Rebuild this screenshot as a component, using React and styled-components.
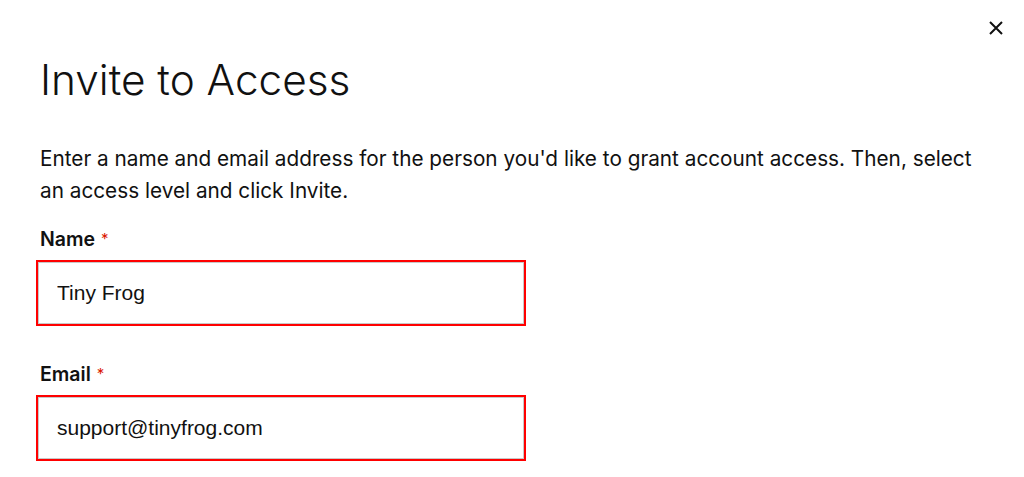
import React from "react";
import styled, { createGlobalStyle } from "styled-components";

const Global = createGlobalStyle`
  html, body { margin: 0; padding: 0; background: #fff; }
  body { font-family: Inter, "Noto Sans", sans-serif; color: #111; }
`;

const Dialog = styled.div`
  position: relative;
  width: 1024px;
  height: 477px;
  box-sizing: border-box;
  padding: 52px 40px 0 40px;
  overflow: hidden;
`;

const Close = styled.button`
  position: absolute;
  top: 20px;
  right: 20px;
  width: 16px;
  height: 16px;
  padding: 0;
  border: none;
  background: none;
  display: flex;
  align-items: center;
  justify-content: center;
  cursor: pointer;
`;

const Title = styled.h1`
  margin: 0;
  font-weight: 300;
  font-size: 42.3px;
  line-height: 56px;
  letter-spacing: 0;
  color: #111;
`;

const Intro = styled.p`
  margin: 35px 0 0 0;
  font-size: 20.75px;
  line-height: 32px;
  color: #111;
  max-width: 944px;
`;

const Field = styled.div`
  display: flex;
  flex-direction: column;
  margin-top: ${(p) => p.$gap}px;
`;

const Label = styled.label`
  font-size: 19.5px;
  font-weight: 600;
  line-height: 26px;
  color: #111;
  margin-bottom: 8px;
`;

const Req = styled.span`
  color: #db1802;
  font-weight: 400;
  font-size: 15px;
  margin-left: 6px;
  vertical-align: top;
`;

const Highlight = styled.div`
  width: 490px;
  box-sizing: border-box;
  border: 2px solid #f00;
  margin-left: -4px;
`;

const Input = styled.input`
  display: block;
  width: 100%;
  box-sizing: border-box;
  height: 62px;
  border: 1px solid #c8c8c8;
  padding: 0 18px;
  font-family: "Liberation Sans", Arial, sans-serif;
  font-size: 21px;
  color: #111;
  background: #fff;
  outline: none;
`;

export default function App() {
  return (
    <>
      <Global />
      <Dialog>
        <Close aria-label="Close">
          <svg width="16" height="16" viewBox="0 0 16 16">
            <path d="M2 2 L14 14 M14 2 L2 14" stroke="#111" strokeWidth="2" />
          </svg>
        </Close>
        <Title>Invite to Access</Title>
        <Intro>
          Enter a name and email address for the person you'd like to grant account access. Then, select an access level and click Invite.
        </Intro>
        <Field $gap={19}>
          <Label>
            Name<Req>*</Req>
          </Label>
          <Highlight>
            <Input defaultValue="Tiny Frog" />
          </Highlight>
        </Field>
        <Field $gap={35}>
          <Label>
            Email<Req>*</Req>
          </Label>
          <Highlight>
            <Input defaultValue="support@tinyfrog.com" />
          </Highlight>
        </Field>
      </Dialog>
    </>
  );
}
